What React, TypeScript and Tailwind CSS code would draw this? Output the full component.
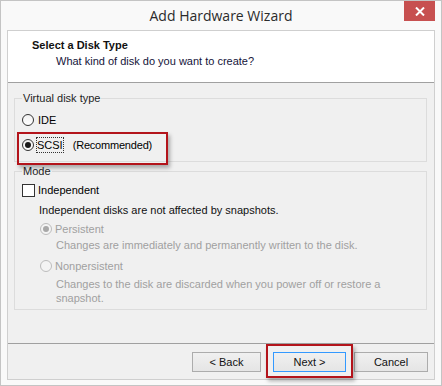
import type { ReactNode } from 'react';

const ui = "font-['Liberation_Sans',Arial,sans-serif] text-[11px] leading-[14px]";

function Radio({ checked, disabled }: { checked?: boolean; disabled?: boolean }) {
  return (
    <span
      className={`flex h-[12px] w-[12px] shrink-0 items-center justify-center rounded-full border ${
        disabled
          ? 'border-[#bcbcbc] bg-[#f4f4f4]'
          : 'border-[#333333] bg-gradient-to-b from-[#f0f0f0] to-white'
      }`}
    >
      {checked && (
        <span
          className={`h-[6px] w-[6px] rounded-full ${disabled ? 'bg-[#a8a8a8]' : 'bg-[#1a1a1a]'}`}
        />
      )}
    </span>
  );
}

function Group({ title, className, children }: { title: string; className?: string; children: ReactNode }) {
  return (
    <fieldset className={`border border-[#dcdcdc] px-[7px] ${className ?? ''}`}>
      <legend className="px-[1px] text-[#1e1e1e]">{title}</legend>
      {children}
    </fieldset>
  );
}

function Button({ label, primary, className }: { label: string; primary?: boolean; className?: string }) {
  return (
    <button
      className={`flex h-[20px] items-center justify-center border bg-gradient-to-b from-[#f0f0f0] to-[#e5e5e5] text-[#111] ${
        primary ? 'border-[#3399ff]' : 'border-[#acacac]'
      } ${className ?? ''}`}
    >
      {label}
    </button>
  );
}

export default function App() {
  return (
    <div className={`relative flex h-[386px] w-[442px] flex-col border border-[#c4c4c4] bg-[#f9f9f9] ${ui}`}>
      {/* title bar */}
      <div className="grid h-[29px] grid-cols-[1fr_auto_1fr]">
        <div />
        <div className="self-center pt-[1px] font-['Open_Sans',sans-serif] text-[14px] leading-[20px] text-[#2b2b2b]">
          Add Hardware Wizard
        </div>
        <div className="flex justify-end pr-[6px]">
          <div className="flex h-[20px] w-[31px] items-center justify-center bg-[#c75050]">
            <svg width="10" height="9" viewBox="0 0 10 9">
              <path d="M1 0.5 L9 8.5 M9 0.5 L1 8.5" stroke="white" strokeWidth="2" />
            </svg>
          </div>
        </div>
      </div>

      {/* client */}
      <div className="mx-[6px] mb-[5px] flex flex-1 flex-col border border-[#cfcfcf]">
        <div className="h-[52px] border-b border-[#a0a0a0] bg-white pt-[7px]">
          <div className="pl-[24px] font-bold text-[#111]">Select a Disk Type</div>
          <div className="mt-[2px] pl-[48px] text-[#14143a]">What kind of disk do you want to create?</div>
        </div>

        <div className="flex flex-1 flex-col bg-[#f0f0f0] pl-[6px] pr-[7px]">
          <Group title="Virtual disk type" className="mt-[8px] pb-[9px]">
            <div className="mt-[8px] flex h-[14px] items-center gap-[4px]">
              <Radio />
              <span>IDE</span>
            </div>
            <div className="mt-[11px] flex h-[14px] items-center gap-[3px]">
              <Radio checked />
              <span className="outline outline-1 outline-dotted outline-[#333]">SCSI</span>
              <span className="ml-[7px] tracking-[-0.2px]">(Recommended)</span>
            </div>
          </Group>

          <Group title="Mode" className="mt-[2px] pb-[4px]">
            <div className="mt-[5px] flex h-[14px] items-center gap-[3px]">
              <span className="h-[13px] w-[13px] border border-[#333] bg-white" />
              <span>Independent</span>
            </div>
            <div className="mt-[6px] pl-[17px] text-[#111]">Independent disks are not affected by snapshots.</div>
            <div className="mt-[5px] flex h-[14px] items-center gap-[3px] pl-[18px] text-[#a0a0a0]">
              <Radio checked disabled />
              <span>Persistent</span>
            </div>
            <div className="mt-[2px] pl-[34px] text-[#a0a0a0]">
              Changes are immediately and permanently written to the disk.
            </div>
            <div className="mt-[7px] flex h-[14px] items-center gap-[3px] pl-[18px] text-[#a0a0a0]">
              <Radio disabled />
              <span>Nonpersistent</span>
            </div>
            <div className="mt-[4px] pl-[34px] text-[#a0a0a0]">
              Changes to the disk are discarded when you power off or restore a
              <br />
              snapshot.
            </div>
          </Group>
        </div>

        <div className="flex h-[36px] items-start justify-end border-t border-[#a0a0a0] bg-[#f0f0f0] pr-[6px] pt-[8px]">
          <Button label="< Back" className="w-[69px]" />
          <Button label="Next >" primary className="ml-[12px] w-[73px]" />
          <Button label="Cancel" className="ml-[8px] w-[74px]" />
        </div>
      </div>

      {/* annotation highlights */}
      <div className="absolute left-[16px] top-[131px] h-[33px] w-[151px] border-2 border-[#b3141b] shadow-[2px_3px_4px_rgba(0,0,0,0.3)]" />
      <div className="absolute left-[265px] top-[343px] h-[34px] w-[87px] border-2 border-[#b3141b] shadow-[2px_3px_4px_rgba(0,0,0,0.3)]" />
    </div>
  );
}
